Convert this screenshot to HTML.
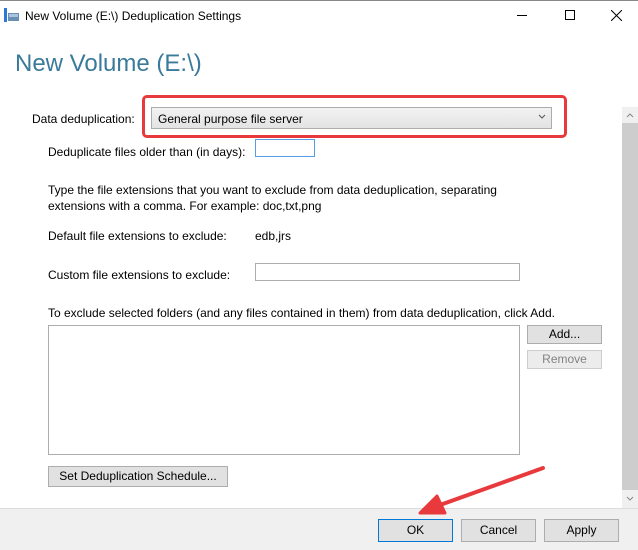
<!DOCTYPE html>
<html><head><style>
*{margin:0;padding:0;box-sizing:border-box}
body{width:638px;height:550px;background:#fff;font-family:"Liberation Sans",sans-serif;font-size:12px;color:#000;position:relative;overflow:hidden}
.a{position:absolute;white-space:nowrap}
.btn{position:absolute;background:#e1e1e1;border:1px solid #adadad;text-align:center;font-size:12px}
.inp{position:absolute;background:#fff;border:1px solid #7a7a7a}
</style></head><body>
<div class="a" style="left:0;top:0;width:638px;height:1px;background:#888"></div>
<svg class="a" style="left:4px;top:8px" width="16" height="14" viewBox="0 0 16 14"><rect x="0" y="0" width="3" height="14" fill="#2b79d0"/><rect x="4" y="5" width="11" height="8" fill="#6a8fb5"/><rect x="5" y="6" width="9" height="3" fill="#a9c4de"/></svg>
<div class="a" style="left:25px;top:9px;font-size:12px">New Volume (E:\) Deduplication Settings</div>
<div class="a" style="left:517px;top:15px;width:10px;height:1px;background:#000"></div>
<div class="a" style="left:565px;top:10px;width:10px;height:10px;border:1px solid #000"></div>
<svg class="a" style="left:611px;top:10px" width="11" height="11"><path d="M0 0L11 11M11 0L0 11" stroke="#000" stroke-width="1"/></svg>
<div class="a" style="left:15px;top:50px;font-size:24px;color:#3a7a9a;font-weight:300">New Volume (E:\)</div>
<div class="a" style="left:32px;top:112px">Data deduplication:</div>
<div class="a" style="left:142px;top:95px;width:425px;height:43px;border:3px solid #e8393d;border-radius:5px"></div>
<div class="a" style="left:151px;top:107px;width:401px;height:22px;background:linear-gradient(#f2f2f2,#e3e3e3);border:1px solid #acacac"></div>
<div class="a" style="left:158px;top:112px">General purpose file server</div>
<svg class="a" style="left:538px;top:114px" width="8" height="6"><path d="M1 1L4 4L7 1" stroke="#555" fill="none"/></svg>
<div class="a" style="left:48px;top:145px">Deduplicate files older than (in days):</div>
<div class="inp" style="left:255px;top:139px;width:60px;height:18px;border-color:#569de5"></div>
<div class="a" style="left:48px;top:182px;line-height:16px">Type the file extensions that you want to exclude from data deduplication, separating<br>extensions with a comma. For example: doc,txt,png</div>
<div class="a" style="left:48px;top:229px">Default file extensions to exclude:</div>
<div class="a" style="left:255px;top:229px">edb,jrs</div>
<div class="a" style="left:48px;top:268px">Custom file extensions to exclude:</div>
<div class="inp" style="left:255px;top:263px;width:265px;height:18px;border-color:#adadad"></div>
<div class="a" style="left:48px;top:306px">To exclude selected folders (and any files contained in them) from data deduplication, click Add.</div>
<div class="inp" style="left:48px;top:325px;width:472px;height:130px;border-color:#adadad"></div>
<div class="btn" style="left:527px;top:325px;width:75px;height:19px;line-height:17px">Add...</div>
<div class="btn" style="left:527px;top:350px;width:75px;height:19px;line-height:17px;color:#838383;background:#ececec;border-color:#cdcdcd">Remove</div>
<div class="btn" style="left:48px;top:466px;width:180px;height:21px;line-height:19px">Set Deduplication Schedule...</div>
<div class="a" style="left:622px;top:107px;width:16px;height:401px;background:#f0f0f0"></div>
<div class="a" style="left:622px;top:123px;width:16px;height:367px;background:#cdcdcd"></div>
<svg class="a" style="left:626px;top:112px" width="8" height="6"><path d="M1 5L4 2L7 5" stroke="#888" fill="none"/></svg>
<svg class="a" style="left:626px;top:496px" width="8" height="6"><path d="M1 1L4 4L7 1" stroke="#888" fill="none"/></svg>
<div class="a" style="left:0;top:508px;width:638px;height:42px;background:#f0f0f0;border-top:1px solid #dcdcdc"></div>
<div class="btn" style="left:378px;top:519px;width:75px;height:23px;line-height:21px;border-color:#0078d7">OK</div>
<div class="btn" style="left:461px;top:519px;width:75px;height:23px;line-height:21px">Cancel</div>
<div class="btn" style="left:544px;top:519px;width:75px;height:23px;line-height:21px">Apply</div>
<svg class="a" style="left:0;top:0" width="638" height="550"><path d="M543 468L440 505" stroke="#e8393d" stroke-width="4" stroke-linecap="round"/><path d="M420 513L437 496L445 513Z" fill="#e8393d" stroke="#e8393d" stroke-width="3" stroke-linejoin="round"/></svg>
</body></html>
